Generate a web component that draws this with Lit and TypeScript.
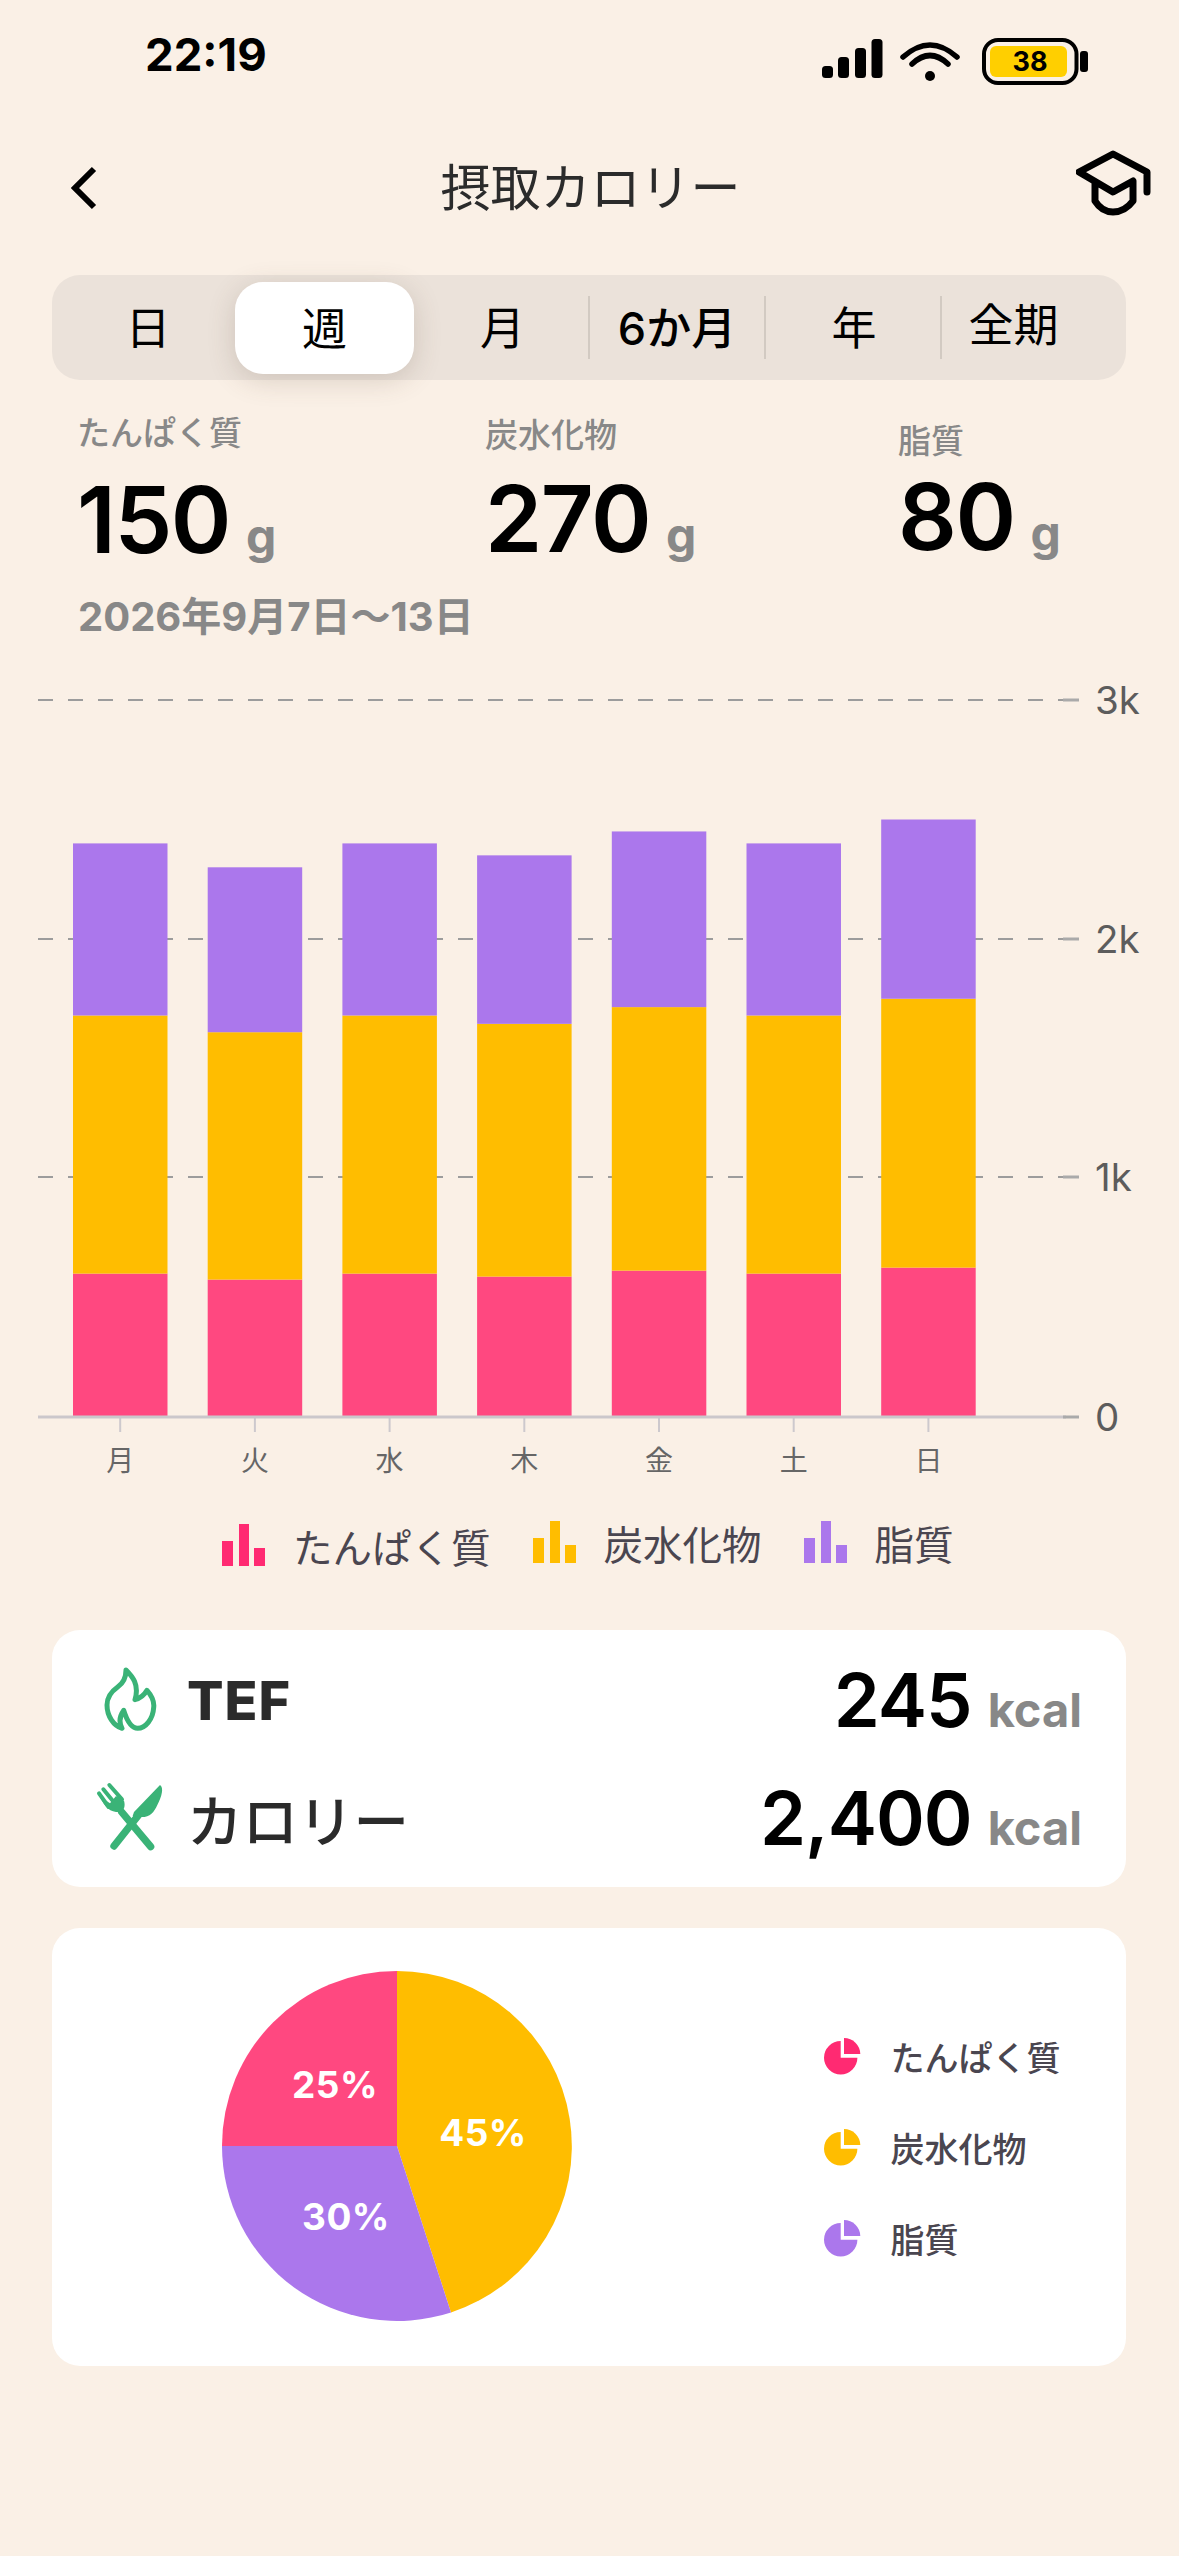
import { LitElement, html, css, svg } from "lit";
import { customElement } from "lit/decorators.js";

const DAYS = ["月", "火", "水", "木", "金", "土", "日"];
const TOTALS = [2400, 2300, 2400, 2350, 2450, 2400, 2500];
const BASE = 1417;
const K = 0.239;

function pieIcon(color: string) {
  return html`<svg class="pi" viewBox="0 0 36.5 37" fill=${color}>
    <path d="M16.7 3A16.7 16.7 0 1 0 33.4 19.7H16.7Z" />
    <path d="M20 16V0A16.3 16.3 0 0 1 36.3 16Z" />
  </svg>`;
}

function barIcon(color: string) {
  return html`<svg class="bi" viewBox="0 0 43 42" fill=${color}>
    <rect x="0" y="17" width="11" height="25" />
    <rect x="17" y="0" width="10" height="42" />
    <rect x="32" y="24" width="11" height="18" />
  </svg>`;
}

@customElement("app-root")
export class AppRoot extends LitElement {
  static styles = css`
    :host {
      display: block;
      width: 1179px;
      height: 2556px;
      background: #faf0e6;
      overflow: hidden;
      font-family: "Noto Sans CJK JP", "Inter", sans-serif;
    }
    .status {
      height: 130px;
      display: flex;
      justify-content: space-between;
      align-items: flex-start;
      padding: 0 89px 0 145px;
      box-sizing: border-box;
    }
    .time {
      font-family: "Inter", sans-serif;
      font-weight: 700;
      font-size: 45.5px;
      line-height: 50px;
      margin-top: 30px;
      color: #000;
    }
    .status-icons {
      width: 270px;
      height: 50px;
      margin-top: 36px;
    }
    .batt {
      font-family: "Inter", sans-serif;
      font-weight: 700;
      font-size: 27px;
      text-anchor: middle;
    }
    .nav {
      height: 145px;
      display: grid;
      grid-template-columns: 1fr auto 1fr;
      align-items: start;
      padding: 0 25px 0 27px;
    }
    .back {
      width: 26px;
      height: 44px;
      margin: 36px 0 0 44px;
    }
    .title {
      font-size: 50px;
      line-height: 68px;
      margin-top: 20px;
      color: #2b2b2b;
      font-weight: 400;
    }
    .cap {
      width: 78px;
      height: 68px;
      margin-top: 19px;
      justify-self: end;
    }
    .seg {
      margin: 0 53px 0 52px;
      height: 105px;
      background: #ebe2da;
      border-radius: 28px;
      display: grid;
      grid-template-columns: 183px 179px 175px 176px 176px 185px;
    }
    .cell {
      display: flex;
      align-items: center;
      justify-content: center;
      font-size: 45px;
      color: #000;
      position: relative;
      padding-bottom: 4px;
      box-sizing: border-box;
    }
    .cell.first {
      padding-left: 9px;
    }
    .cell.mid {
      padding-left: 2px;
    }
    .cell.on {
      background: #fff;
      border-radius: 28px;
      margin: 7px 0 6px;
      box-shadow: 0 6px 28px rgba(90, 70, 55, 0.2);
    }
    .cell.div::before {
      content: "";
      position: absolute;
      left: -1px;
      top: 21px;
      height: 63px;
      width: 2px;
      background: #d2cac2;
    }
    .cell.six {
      font-family: "Inter", "Noto Sans CJK JP", sans-serif;
      font-weight: 500;
      font-size: 45px;
    }
    .cell.all {
      padding: 0 40px 10px 0;
    }
    .stats {
      height: 190px;
      display: grid;
      grid-template-columns: 408px 413px 1fr;
      padding-left: 77px;
      box-sizing: border-box;
    }
    .stat {
      padding-top: 28px;
    }
    .stat.b {
      padding-top: 30px;
    }
    .stat.c {
      padding-top: 36px;
    }
    .stat-label {
      font-size: 33px;
      line-height: 46px;
      color: #888;
      font-weight: 500;
    }
    .stat-val {
      display: flex;
      align-items: baseline;
      gap: 16px;
      margin-top: 16px;
      line-height: 100px;
    }
    .stat.b .stat-val {
      margin-top: 13px;
    }
    .stat.c .stat-val {
      margin-top: 5px;
    }
    .num {
      font-family: "Inter", sans-serif;
      font-weight: 600;
      font-size: 92px;
      letter-spacing: -1.5px;
      color: #000;
      line-height: 100px;
    }
    .g {
      font-family: "Inter", sans-serif;
      font-weight: 700;
      font-size: 48px;
      color: #888;
    }
    .date {
      height: 100px;
      padding: 22px 0 0 78px;
      box-sizing: border-box;
      font-family: "Inter", "Noto Sans CJK JP", sans-serif;
      font-weight: 700;
      font-size: 40px;
      line-height: 50px;
      color: #888;
    }
    .chart {
      display: block;
      width: 1179px;
      height: 820px;
    }
    .axis-y {
      font-family: "Inter", sans-serif;
      font-size: 38.5px;
      fill: #5c5c5c;
    }
    .axis-x {
      font-family: "Noto Sans CJK JP", sans-serif;
      font-size: 28px;
      fill: #666;
      text-anchor: middle;
    }
    .legend {
      height: 140px;
      box-sizing: border-box;
      padding: 27px 0 0 222px;
      display: flex;
      align-items: flex-start;
    }
    .lg {
      display: flex;
      align-items: center;
      gap: 28px;
      height: 56px;
      font-size: 39.5px;
      color: #4a4650;
      margin-right: 42px;
    }
    .lg.up {
      margin-top: -3px;
    }
    .bi {
      width: 43px;
      height: 42px;
      flex: none;
    }
    .card {
      margin: 0 53px 0 52px;
      background: #fff;
      border-radius: 28px;
    }
    .macro {
      height: 257px;
      box-sizing: border-box;
      padding: 11px 44px 10px 45px;
    }
    .row {
      height: 118px;
      display: flex;
      align-items: center;
      justify-content: space-between;
    }
    .row-l {
      display: flex;
      align-items: center;
      gap: 24px;
    }
    .ic {
      width: 66px;
      height: 72px;
      display: flex;
      align-items: center;
      justify-content: center;
    }
    .flame {
      flex: none;
      width: 55px;
      height: 65px;
      margin: 0 2px 2px 0;
    }
    .fork {
      flex: none;
      width: 70px;
      height: 72px;
    }
    .tef {
      font-family: "Inter", sans-serif;
      font-weight: 800;
      font-size: 54px;
      letter-spacing: 1px;
      color: #2b2b2b;
    }
    .kal {
      font-size: 55.5px;
      font-weight: 500;
      color: #2b2b2b;
    }
    .row-r {
      display: flex;
      align-items: baseline;
      gap: 16px;
    }
    .big {
      font-family: "Inter", sans-serif;
      font-weight: 600;
      font-size: 74px;
      letter-spacing: -1px;
      color: #000;
    }
    .unit {
      font-family: "Inter", sans-serif;
      font-weight: 700;
      font-size: 47px;
      color: #888;
    }
    .pie-card {
      margin-top: 41px;
      height: 438px;
      display: flex;
      align-items: flex-start;
    }
    .pie {
      width: 350px;
      height: 350px;
      margin: 43px 0 0 170px;
    }
    .pct {
      font-family: "Inter", sans-serif;
      font-weight: 700;
      font-size: 37px;
      letter-spacing: 0.5px;
      fill: #fff;
      text-anchor: middle;
    }
    .pl {
      margin: 83px 0 0 252px;
      display: flex;
      flex-direction: column;
    }
    .pl-row {
      height: 91px;
      display: flex;
      align-items: center;
      gap: 30px;
      font-size: 34px;
      font-weight: 500;
      color: #4a4650;
    }
    .pi {
      width: 36.5px;
      height: 37px;
      flex: none;
    }
  `;

  private chart() {
    const grid = [700, 939, 1177].map(
      (y) =>
        svg`<line x1="38" x2="1068" y1=${y} y2=${y} stroke="#9c9c9c" stroke-width="2" stroke-dasharray="15 15" />`
    );
    const ends = [700, 939, 1177, 1417].map(
      (y) =>
        svg`<line x1="1063" x2="1079" y1=${y} y2=${y} stroke="#aaa" stroke-width="3" />`
    );
    const labels = [
      ["3k", 700],
      ["2k", 939],
      ["1k", 1177],
      ["0", 1417],
    ].map(
      ([t, y]) =>
        svg`<text class="axis-y" x="1095" y=${(y as number) + 14}>${t}</text>`
    );
    const bars = TOTALS.map((t, i) => {
      const x = 73 + i * 134.7;
      const p = t * 0.25 * K;
      const c = t * 0.45 * K;
      const f = t * 0.3 * K;
      return svg`
        <rect x=${x} y=${BASE - p} width="94.5" height=${p} fill="#ff4880" />
        <rect x=${x} y=${BASE - p - c} width="94.5" height=${c} fill="#ffbd00" />
        <rect x=${x} y=${BASE - p - c - f} width="94.5" height=${f} fill="#ab77ec" />
        <line x1=${x + 47.2} x2=${x + 47.2} y1="1418" y2="1432" stroke="#cdc9cd" stroke-width="2" />
        <text class="axis-x" x=${x + 47.2} y="1471">${DAYS[i]}</text>
      `;
    });
    return html`<svg class="chart" viewBox="0 670 1179 820">
      ${grid} ${bars}
      <line x1="38" x2="1066" y1="1417" y2="1417" stroke="#cbc7cb" stroke-width="3" />
      ${ends} ${labels}
    </svg>`;
  }

  render() {
    return html`
      <div class="status">
        <div class="time">22:19</div>
        <svg class="status-icons" viewBox="820 36 270 50">
          <rect x="822" y="66" width="11" height="12" rx="3.5" />
          <rect x="838" y="57" width="11" height="21" rx="3.5" />
          <rect x="855" y="48" width="11" height="30" rx="3.5" />
          <rect x="871.5" y="39" width="11" height="39" rx="3.5" />
          <path d="M903 57Q930 33 957 57" fill="none" stroke="#000" stroke-width="5.5" stroke-linecap="round" />
          <path d="M912 64Q930 47 948 64" fill="none" stroke="#000" stroke-width="5.5" stroke-linecap="round" />
          <circle cx="930" cy="76" r="5" />
          <rect x="984" y="40" width="92.5" height="43" rx="14" fill="none" stroke="#000" stroke-width="4" />
          <rect x="990" y="46" width="77" height="31" rx="6" fill="#ffcf00" />
          <rect x="1080" y="51" width="8" height="21" rx="3" />
          <text class="batt" x="1030" y="71">38</text>
        </svg>
      </div>
      <div class="nav">
        <svg class="back" viewBox="0 0 26 44">
          <path d="M23 3L4 22L23 41" fill="none" stroke="#000" stroke-width="6" />
        </svg>
        <div class="title">摂取カロリー</div>
        <svg class="cap" viewBox="1076 148 78 68" fill="none" stroke="#000" stroke-width="7" stroke-linecap="round" stroke-linejoin="round">
          <path d="M1147 191V171L1113 153L1079 171L1113 191L1133 180V200C1127 208 1120 211 1113 211C1106 211 1100 208 1095 200V182" />
        </svg>
      </div>
      <div class="seg">
        <div class="cell first">日</div>
        <div class="cell on">週</div>
        <div class="cell mid">月</div>
        <div class="cell six div">6か月</div>
        <div class="cell mid div">年</div>
        <div class="cell div all">全期</div>
      </div>
      <div class="stats">
        <div class="stat">
          <div class="stat-label">たんぱく質</div>
          <div class="stat-val"><span class="num">150</span><span class="g">g</span></div>
        </div>
        <div class="stat b">
          <div class="stat-label">炭水化物</div>
          <div class="stat-val"><span class="num">270</span><span class="g">g</span></div>
        </div>
        <div class="stat c">
          <div class="stat-label">脂質</div>
          <div class="stat-val"><span class="num">80</span><span class="g">g</span></div>
        </div>
      </div>
      <div class="date">2026年9月7日〜13日</div>
      ${this.chart()}
      <div class="legend">
        <div class="lg">${barIcon("#ff2a72")}<span>たんぱく質</span></div>
        <div class="lg up">${barIcon("#ffbd00")}<span>炭水化物</span></div>
        <div class="lg up">${barIcon("#ab77ec")}<span>脂質</span></div>
      </div>
      <div class="card macro">
        <div class="row">
          <div class="row-l">
            <div class="ic">
              <svg class="flame" viewBox="125 78 165 195" fill="none" stroke="#3ab377" stroke-width="15" stroke-linejoin="round">
                <path d="M197 87C215 105 238 130 224 176C240 172 252 162 260 148C275 165 282 185 280 200C278 235 255 262 232 262C212 262 200 240 190 208C178 225 176 245 185 262C160 255 140 225 140 192C140 170 155 150 172 138C188 127 197 110 197 87Z" />
              </svg>
            </div>
            <span class="tef">TEF</span>
          </div>
          <div class="row-r"><span class="big">245</span><span class="unit">kcal</span></div>
        </div>
        <div class="row">
          <div class="row-l">
            <div class="ic">
              <svg class="fork" viewBox="105 428 210 216" fill="#3ab377" stroke="none">
                <path d="M162 620L240 522" stroke="#3ab377" stroke-width="22" stroke-linecap="round" />
                <path d="M300 437C312 445 306 470 292 497C282 520 268 536 238 533L218 530L222 518Z" />
                <path d="M272 622L185 518" stroke="#3ab377" stroke-width="22" stroke-linecap="round" />
                <path d="M117 462L146 503M130 450L163 490M148 437L186 480" stroke="#3ab377" stroke-width="12" stroke-linecap="round" />
                <path d="M120 472L150 492L168 470L192 484C197 500 192 516 178 518C150 518 135 505 120 472Z" />
              </svg>
            </div>
            <span class="kal">カロリー</span>
          </div>
          <div class="row-r"><span class="big">2,400</span><span class="unit">kcal</span></div>
        </div>
      </div>
      <div class="card pie-card">
        <svg class="pie" viewBox="222 1971 350 350">
          <path d="M397 2146V1971A175 175 0 0 0 222 2146Z" fill="#ff4880" />
          <path d="M397 2146V1971A175 175 0 0 1 451 2312.4Z" fill="#ffbd00" />
          <path d="M397 2146L451 2312.4A175 175 0 0 1 222 2146Z" fill="#ab77ec" />
          <text class="pct" x="335" y="2098">25%</text>
          <text class="pct" x="483" y="2146">45%</text>
          <text class="pct" x="346" y="2230">30%</text>
        </svg>
        <div class="pl">
          <div class="pl-row">${pieIcon("#ff2a72")}<span>たんぱく質</span></div>
          <div class="pl-row">${pieIcon("#ffbd00")}<span>炭水化物</span></div>
          <div class="pl-row">${pieIcon("#ab77ec")}<span>脂質</span></div>
        </div>
      </div>
    `;
  }
}
